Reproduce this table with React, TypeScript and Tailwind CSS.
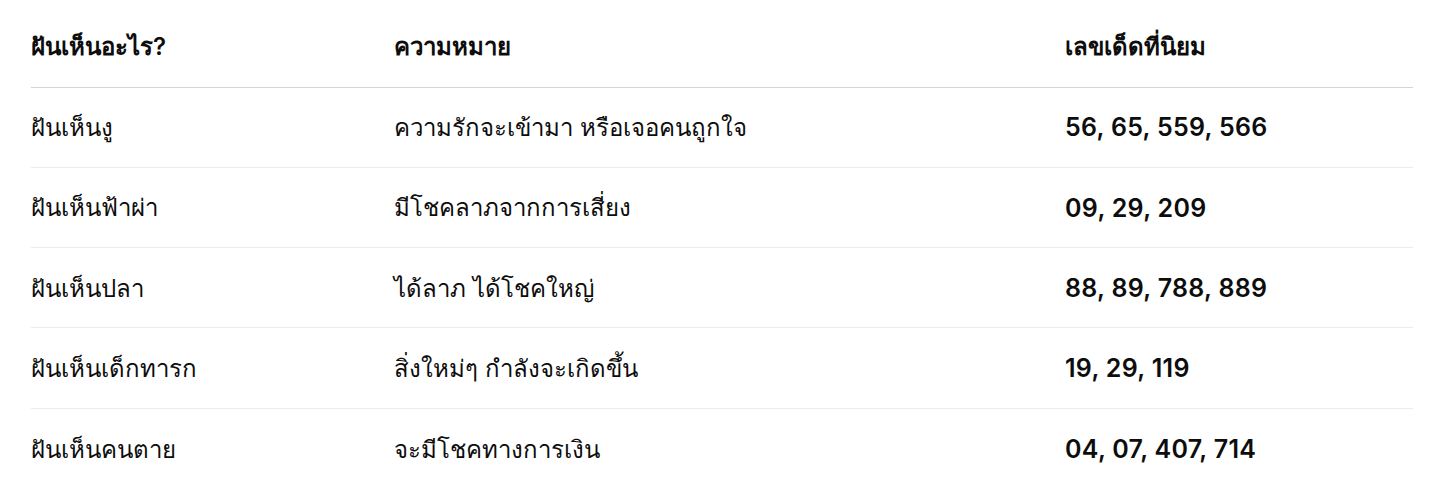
import React from "react";

const rows = [
  { dream: "ฝันเห็นงู", meaning: "ความรักจะเข้ามา หรือเจอคนถูกใจ", nums: "56, 65, 559, 566" },
  { dream: "ฝันเห็นฟ้าผ่า", meaning: "มีโชคลาภจากการเสี่ยง", nums: "09, 29, 209" },
  { dream: "ฝันเห็นปลา", meaning: "ได้ลาภ ได้โชคใหญ่", nums: "88, 89, 788, 889" },
  { dream: "ฝันเห็นเด็กทารก", meaning: "สิ่งใหม่ๆ กำลังจะเกิดขึ้น", nums: "19, 29, 119" },
  { dream: "ฝันเห็นคนตาย", meaning: "จะมีโชคทางการเงิน", nums: "04, 07, 407, 714" },
];

export default function App() {
  return (
    <div
      className="w-[1432px] h-[504px] bg-white overflow-hidden px-[31px] pt-[8px]"
      style={{ fontFamily: '"Inter", "Noto Sans", sans-serif' }}
    >
      <table className="w-[1382px] border-collapse text-[24px] text-[#0d0d0d]">
        <thead>
          <tr className="border-b border-[#d4d4d4]">
            <th className="w-[363px] h-[79px] text-left font-semibold p-0 align-middle">ฝันเห็นอะไร?</th>
            <th className="w-[671px] text-left font-semibold p-0 align-middle">ความหมาย</th>
            <th className="text-left font-semibold p-0 align-middle">เลขเด็ดที่นิยม</th>
          </tr>
        </thead>
        <tbody>
          {rows.map((r, i) => (
            <tr key={i} className={i < rows.length - 1 ? "border-b border-[#ececec]" : ""}>
              <td className="h-[80.3px] p-0 pt-[2px] align-middle">{r.dream}</td>
              <td className="p-0 pt-[2px] align-middle">{r.meaning}</td>
              <td className="p-0 pt-[2px] align-middle font-semibold text-[25px] tracking-[0.3px]">{r.nums}</td>
            </tr>
          ))}
        </tbody>
      </table>
    </div>
  );
}
